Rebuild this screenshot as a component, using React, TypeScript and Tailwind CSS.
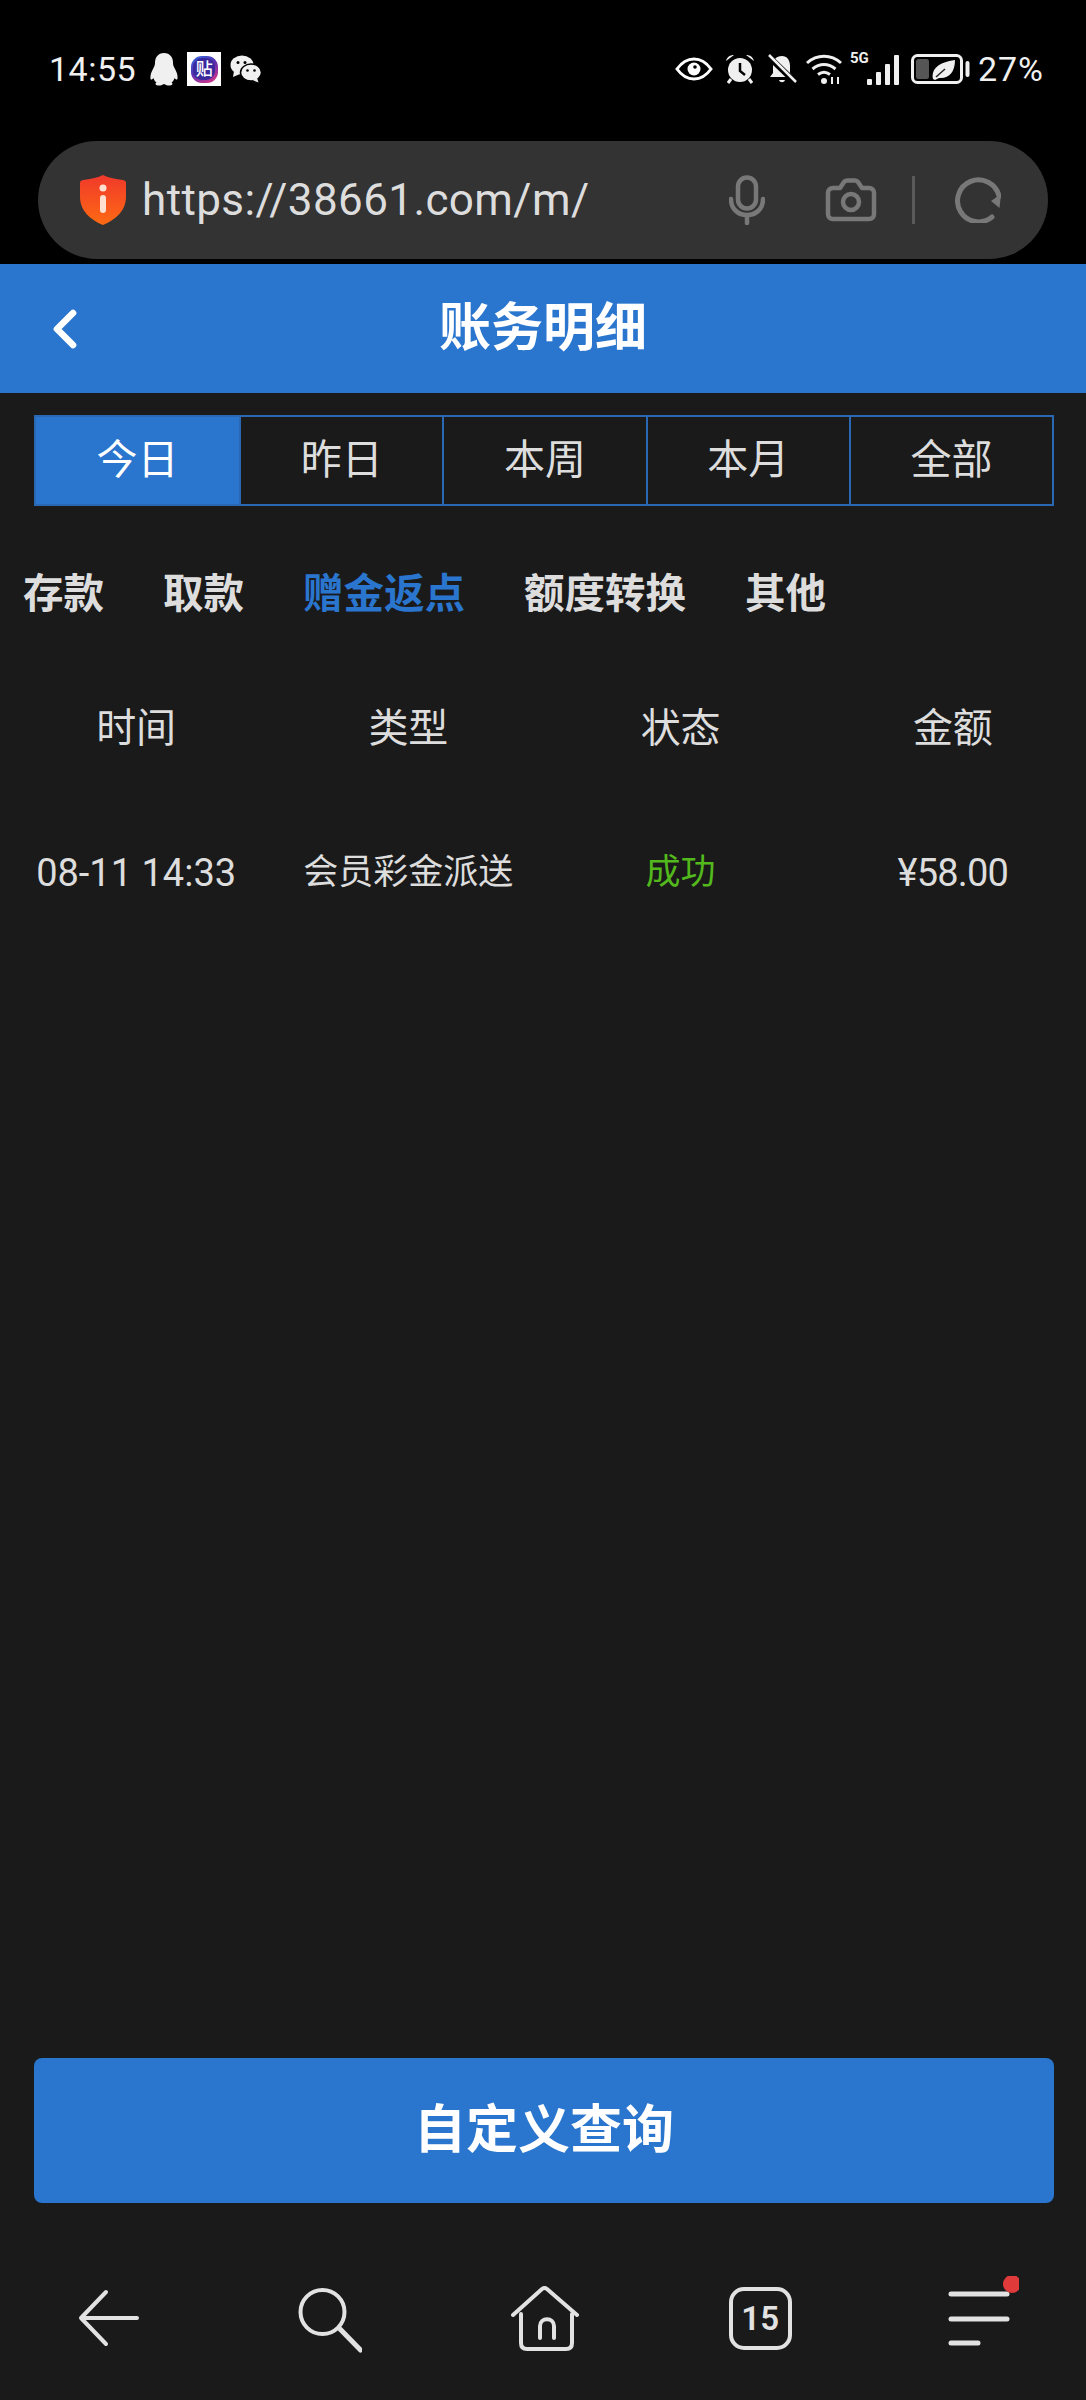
import { ChevronLeft } from "lucide-react";

const periods = ["今日", "昨日", "本周", "本月", "全部"];
const categories = ["存款", "取款", "赠金返点", "额度转换", "其他"];
const columns = ["时间", "类型", "状态", "金额"];

function StatusBar() {
  return (
    <div className="flex h-[141px] items-start justify-between pl-[49px] pr-[42px] pt-[50px] text-[#f0f0f0]">
      <div className="flex h-[38px] items-center">
        <span className="text-[34px] leading-none tracking-[0.5px]">14:55</span>
        <svg width="32" height="34" viewBox="0 0 32 34" className="ml-[12px]" fill="#f0f0f0">
          <path d="M16 1c-6 0-9 4.500-9 9.500 0 2-.3 3.500-1.500 5.500C3.500 19.500 2 23 2.500 27c.5 1 2 .5 3-1 .7 2 1.500 3.500 3 4.500C7 31.500 7 33 10 33.500c2.500.3 4.500-.5 6-1.500 1.500 1 3.500 1.800 6 1.500 3-.5 3-2 1.500-3 1.500-1 2.300-2.500 3-4.500 1 1.500 2.500 2 3 1 .5-4-1-7.500-3-11-1.200-2-1.500-3.500-1.500-5.500C25 5.500 22 1 16 1z" />
        </svg>
        <div className="ml-[7px] flex h-[34px] w-[34px] items-center justify-center bg-white">
          <div className="flex h-[27px] w-[27px] items-center justify-center rounded-[11px] bg-[linear-gradient(150deg,#2f6fe0,#5a2fb0_45%,#c2358f_85%)]">
            <div className="flex h-[22px] w-[22px] items-center justify-center rounded-[9px] bg-[#3a2a9e] text-[17px] font-medium leading-none text-white">
              贴
            </div>
          </div>
        </div>
        <svg width="32" height="28" viewBox="0 0 32 28" className="ml-[9px]">
          <ellipse cx="12" cy="10" rx="11.500" ry="9.500" fill="#f0f0f0" />
          <path d="M4 16l-1 6 7-3z" fill="#f0f0f0" />
          <ellipse cx="21" cy="17.500" rx="10.500" ry="8.500" fill="#f0f0f0" stroke="#000" strokeWidth="1.500" />
          <path d="M27 23l1.500 4.500-6-2.500z" fill="#f0f0f0" />
          <circle cx="8" cy="7.500" r="1.500" fill="#000" />
          <circle cx="15" cy="7.500" r="1.500" fill="#000" />
          <circle cx="17.500" cy="15.500" r="1.300" fill="#000" />
          <circle cx="24.500" cy="15.500" r="1.300" fill="#000" />
        </svg>
      </div>
      <div className="flex h-[38px] items-center">
        <svg width="38" height="24" viewBox="0 0 38 24" fill="none">
          <path d="M2 12C7 5 12 2 19 2s12 3 17 10c-5 7-10 10-17 10S7 19 2 12z" stroke="#fff" strokeWidth="3" />
          <circle cx="19" cy="12" r="6.500" fill="#fff" />
          <circle cx="20" cy="10" r="1.800" fill="#000" />
        </svg>
        <svg width="32" height="32" viewBox="0 0 32 32" className="ml-[11px]" fill="none">
          <circle cx="16" cy="17" r="12" fill="#f0f0f0" />
          <path d="M16 10v8l5 4" stroke="#000" strokeWidth="2.500" />
          <path d="M2 8c1-4 4-6 8-6zM30 8c-1-4-4-6-8-6z" fill="#f0f0f0" />
          <path d="M7 26l-3 4M25 26l3 4" stroke="#f0f0f0" strokeWidth="3" />
        </svg>
        <svg width="30" height="32" viewBox="0 0 30 32" className="ml-[11px]" fill="none">
          <path d="M15 3c-6 0-9 4-9 10v7l-3 4h23l-3-4v-7c0-6-3-10-8-10z" fill="#f0f0f0" />
          <path d="M12 27c1 3 5 3 6 0z" fill="#f0f0f0" />
          <path d="M1 3l28 27" stroke="#000" strokeWidth="6" />
          <path d="M2 2l27 27" stroke="#f0f0f0" strokeWidth="2.500" />
        </svg>
        <svg width="36" height="32" viewBox="0 0 36 32" className="ml-[9px]" fill="none" stroke="#f0f0f0" strokeWidth="3">
          <path d="M1 10c10-9 24-9 34 0" />
          <path d="M6.500 16c7-6 16-6 23 0" />
          <path d="M12 21.500c4-3 8-3 12 0" />
          <circle cx="18" cy="28" r="3" fill="#f0f0f0" stroke="none" />
          <path d="M26 24v7M32 24v7" strokeWidth="2" />
        </svg>
        <div className="relative ml-[8px] h-[32px] w-[49px]">
          <span className="absolute left-0 top-[-2px] text-[15px] font-bold leading-none">5G</span>
          <svg width="32" height="30" viewBox="0 0 32 30" className="absolute bottom-0 right-0" fill="#f0f0f0">
            <rect x="0" y="24" width="5" height="6" rx="1" />
            <rect x="9" y="17" width="5" height="13" rx="1" />
            <rect x="18" y="9" width="5" height="21" rx="1" />
            <rect x="27" y="0" width="5" height="30" rx="1" />
          </svg>
        </div>
        <svg width="59" height="30" viewBox="0 0 59 30" className="ml-[12px]" fill="none">
          <rect x="1.500" y="1.500" width="49" height="27" rx="5" stroke="#f0f0f0" strokeWidth="3" />
          <rect x="5" y="5" width="13" height="20" rx="2.500" fill="#555" />
          <path d="M22 25c-2-10 6-17 22-19 0 12-6 19-16 18l-4 2zM24 24l10-9" fill="#f0f0f0" />
          <path d="M25 23l9-8" stroke="#222" strokeWidth="1.500" />
          <rect x="54.500" y="7" width="4" height="16" rx="2" fill="#f0f0f0" />
        </svg>
        <span className="ml-[8px] text-[34px] leading-none tracking-[1px]">27%</span>
      </div>
    </div>
  );
}

function UrlBar() {
  return (
    <div className="mx-[38px] flex h-[118px] items-center rounded-full bg-[#333333] pl-[42px] pr-[47px]">
      <svg width="46" height="50" viewBox="0 0 46 50">
        <defs>
          <linearGradient id="shield" x1="0" y1="0" x2="0" y2="1">
            <stop offset="0" stopColor="#f0392b" />
            <stop offset="1" stopColor="#ff6a13" />
          </linearGradient>
        </defs>
        <path d="M23 0c6 3 13 4 20 5 2 .3 3 1.500 3 3v14c0 14-11 23-23 28C11 45 0 36 0 22V8c0-1.500 1-2.700 3-3 7-1 14-2 20-5z" fill="url(#shield)" />
        <circle cx="23" cy="13" r="3.500" fill="#ffe0d0" />
        <rect x="20" y="20" width="6" height="18" rx="3" fill="#ffe0d0" />
      </svg>
      <span className="ml-[16px] text-[44px] leading-none tracking-[0.4px] text-[#dddddd]">https://38661.com/m/</span>
      <div className="ml-auto flex items-center text-[#787878]">
        <svg width="36" height="50" viewBox="0 0 36 50" fill="none" stroke="currentColor" strokeWidth="4.500" strokeLinecap="round">
          <rect x="9" y="2.500" width="18" height="31" rx="9" />
          <path d="M2 24c0 10 7 16 16 16s16-6 16-16" />
          <path d="M18 40v8" />
        </svg>
        <svg width="52" height="44" viewBox="0 0 52 44" className="ml-[60px]" fill="none" stroke="currentColor" strokeWidth="4.500" strokeLinejoin="round">
          <path d="M3 15c0-3 2-5 5-5h7l4-6c.6-1 1.500-1.500 3-1.500h8c1.500 0 2.400.5 3 1.500l4 6h7c3 0 5 2 5 5v21c0 3-2 5-5 5H8c-3 0-5-2-5-5z" />
          <circle cx="26" cy="24" r="8" />
        </svg>
        <div className="ml-[35px] h-[48px] w-[3px] bg-[#5a5a5a]" />
        <svg width="46" height="46" viewBox="0 0 46 46" className="ml-[40px]" fill="none" stroke="currentColor" strokeWidth="5" strokeLinecap="round">
          <path d="M37 40A21 21 0 1 1 44 19" />
          <path d="M46 17l-1.500 14-8.500-7z" fill="currentColor" stroke="none" />
        </svg>
      </div>
    </div>
  );
}

function BottomNav() {
  return (
    <div className="grid h-[197px] grid-cols-5 pt-[33px] text-[#e2e2e2]">
      <div className="flex items-center justify-center">
        <svg width="64" height="64" viewBox="0 0 64 64" fill="none" stroke="currentColor" strokeWidth="4" strokeLinecap="round" strokeLinejoin="round">
          <path d="M4 32h56M29 6L4 32l25 26" />
        </svg>
      </div>
      <div className="flex items-center justify-center">
        <svg width="72" height="72" viewBox="0 0 72 72" fill="none" stroke="currentColor" strokeWidth="4" strokeLinecap="round">
          <circle cx="32.500" cy="30" r="22" />
          <path d="M50 47l20.500 21" strokeWidth="5" />
        </svg>
      </div>
      <div className="flex items-center justify-center">
        <svg width="72" height="72" viewBox="0 0 72 72" fill="none" stroke="currentColor" strokeWidth="4" strokeLinecap="round" strokeLinejoin="round">
          <path d="M6 33L35 7c2-1.500 3-1.500 5 0l30 26" />
          <path d="M14 32v29c0 4 2 6 6 6h39c4 0 6-2 6-6V32" />
          <path d="M33 56V44c0-9 14-9 14 0v12" />
        </svg>
      </div>
      <div className="flex items-center justify-center">
        <div className="flex h-[63px] w-[63px] items-center justify-center rounded-[15px] border-[4px] border-[#e2e2e2] text-[33px] font-semibold leading-none">
          15
        </div>
      </div>
      <div className="flex items-center justify-center">
        <svg width="84" height="84" viewBox="0 0 84 84" fill="none" stroke="currentColor" strokeWidth="5" strokeLinecap="round">
          <path d="M16 18h56M16 43h56M16 67h27" />
          <circle cx="77" cy="8" r="9" fill="#e03a3a" stroke="none" />
        </svg>
      </div>
    </div>
  );
}

export default function App() {
  return (
    <div className="flex h-[2400px] w-[1086px] flex-col overflow-hidden bg-[#1a1a1a] font-['Roboto','Noto_Sans_CJK_SC',sans-serif] text-[#dddddd]">
      <div className="h-[264px] bg-black">
        <StatusBar />
        <UrlBar />
      </div>

      <div className="relative flex h-[129px] items-center justify-center bg-[#2a75cd]">
        <ChevronLeft size={64} strokeWidth={2.500} className="absolute left-[33px] top-[33px] text-white" />
        <span className="text-[52px] font-bold leading-none text-white">账务明细</span>
      </div>

      <div className="ml-[34px] mr-[32px] mt-[22px] grid h-[91px] grid-cols-5 border-2 border-[#2a68b4]">
        {periods.map((p, i) => (
          <div
            key={p}
            className={
              i === 0
                ? "flex items-center justify-center bg-[#2a75cd] text-[41px] text-white"
                : "flex items-center justify-center border-l-2 border-[#2a68b4] text-[41px]"
            }
          >
            {p}
          </div>
        ))}
      </div>

      <div className="mt-[58px] flex h-[60px] items-center gap-[59px] pl-[23px]">
        {categories.map((c, i) => (
          <span
            key={c}
            className={i === 2 ? "text-[40.500px] font-bold text-[#2a75cd]" : "text-[40.500px] font-bold"}
          >
            {c}
          </span>
        ))}
      </div>

      <div className="mt-[75px] grid h-[60px] w-[1089px] grid-cols-4 items-center text-center text-[40px]">
        {columns.map((c) => (
          <span key={c}>{c}</span>
        ))}
      </div>

      <div className="mt-[84px] grid h-[60px] w-[1089px] grid-cols-4 items-center text-center text-[35px]">
        <span className="text-[38px]">08-11 14:33</span>
        <span>会员彩金派送</span>
        <span className="text-[#52b81c]">成功</span>
        <span className="text-[38px] tracking-[-0.8px]">¥58.00</span>
      </div>

      <button
        type="button"
        className="ml-[34px] mr-[32px] mt-auto flex h-[145px] items-center justify-center rounded-[8px] bg-[#2a75cd] text-[52px] font-bold text-white"
      >
        自定义查询
      </button>

      <BottomNav />
    </div>
  );
}
